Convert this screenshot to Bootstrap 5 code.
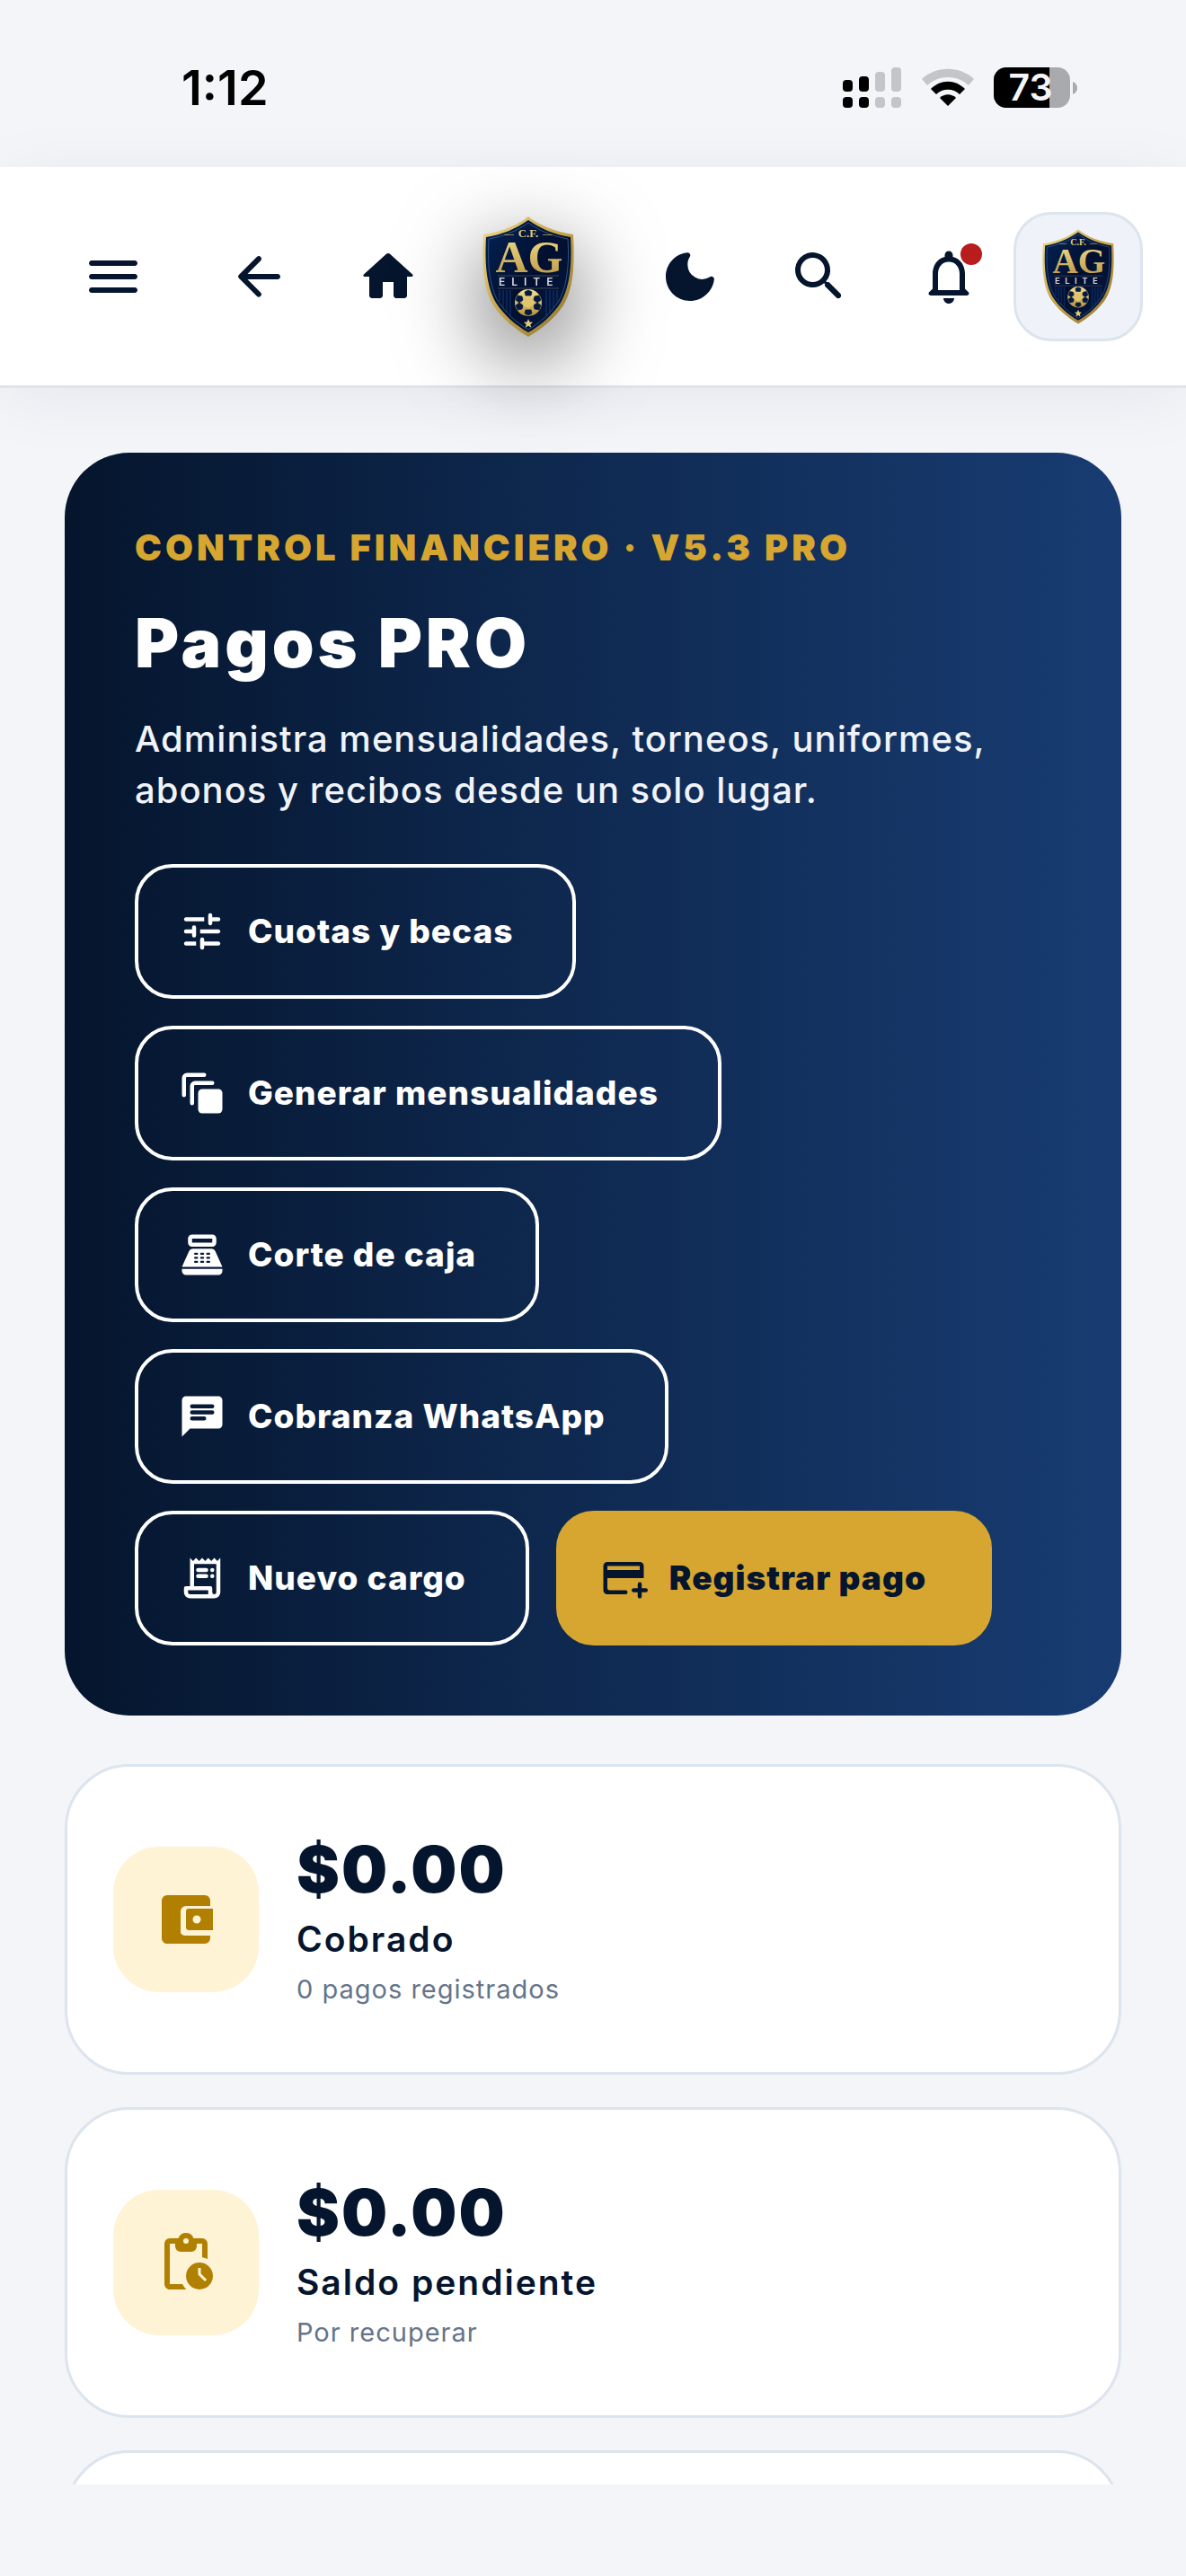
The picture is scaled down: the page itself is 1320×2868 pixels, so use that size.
<!DOCTYPE html>
<html lang="es">
<head>
<meta charset="utf-8">
<meta name="viewport" content="width=device-width, initial-scale=1">
<title>Pagos PRO</title>
<link rel="stylesheet" href="https://cdn.jsdelivr.net/npm/bootstrap@5.3.0/dist/css/bootstrap.min.css">
<style>
  :root { --navy: #05152d; --gold: #d6a630; --line: #dce4ed; --page: #f3f5f9; }
  html, body { height: 100%; }
  body { background: var(--page); color: var(--navy); font-family: Inter, "Liberation Sans", sans-serif; overflow: hidden; }
  .phone { height: 100vh; }
  .status { height: 186px; padding: 10px 120px 0 202px; color: #000; }
  .clock { font-size: 54px; font-weight: 600; line-height: 64px; }
  .topbar { height: 246px; padding: 0 48px 0 75px; background: #fff; border-bottom: 3px solid var(--line); box-shadow: 0 12px 72px rgba(5,21,45,.06); z-index: 2; }
  .tool { width: 102px; height: 102px; padding: 0; border: 0; color: var(--navy); display: flex; align-items: center; justify-content: center; }
  .tool svg, .tile svg { width: 72px; height: 72px; fill: currentColor; }
  .tool-group { gap: 42px; }
  .nav-tools { margin: 0 54px 0 60px; }
  .side-tools { margin-right: 21px; }
  .crest { width: 102px; height: 134px; filter: drop-shadow(0 30px 48px rgba(0,0,0,.6)); }
  .dot { width: 24px; height: 24px; background: #b91c1c; top: 14px; right: 14px; }
  .avatar { width: 144px; height: 144px; border: 3px solid var(--line); border-radius: 42px; background: #eff3f9; padding: 0; }
  .avatar svg { width: 80px; height: 106px; }
  .content { padding: 72px 72px 0; margin-bottom: 102px; }
  .hero { padding: 78px; border-radius: 72px; background: linear-gradient(90deg, #05152d, #0f2a52 50%, #183c72); color: #fff; margin-bottom: 54px; }
  .eyebrow { font-size: 40px; font-weight: 900; line-height: 56px; letter-spacing: 4px; color: var(--gold); margin: 0 0 33px; }
  .hero h1 { font-size: 75px; font-weight: 900; line-height: 90px; letter-spacing: 4px; margin: 0 0 33px; }
  .intro { font-size: 40px; line-height: 57px; font-weight: 500; letter-spacing: 1px; color: #f0f3f9; margin: 0 0 54px; }
  .actions { gap: 30px; }
  .action { height: 150px; padding: 0 66px 0 44px; gap: 24px; border: 4px solid #fff; border-radius: 42px; color: #fff; font-size: 37px; font-weight: 800; letter-spacing: 1px; white-space: nowrap; }
  .action svg { width: 54px; height: 54px; fill: currentColor; }
  .action:hover { color: #fff; border-color: #fff; }
  .action.gold, .action.gold:hover { padding-right: 69px; background: var(--gold); border-color: var(--gold); color: var(--navy); font-weight: 900; }
  .stats { gap: 36px; }
  .stat { min-height: 346px; padding: 0 51px; gap: 42px; border: 3px solid var(--line); border-radius: 72px; background: #fff; }
  .tile { width: 162px; height: 162px; border-radius: 51px; background: #fff3d6; color: #b28000; }
  .amount { font-size: 72px; line-height: 98px; font-weight: 900; letter-spacing: 2px; }
  .caption { font-size: 39px; line-height: 58px; font-weight: 600; letter-spacing: 2px; }
  .note { font-size: 29px; line-height: 54px; letter-spacing: 1px; color: #64748b; }
</style>
</head>
<body>
<div class="phone d-flex flex-column">
  <div class="status d-flex align-items-center justify-content-between flex-shrink-0">
    <span class="clock">1:12</span>
    <svg width="262" height="60" viewBox="0 -7 262 60" role="img" aria-label="Señal, wifi y batería al 73">
      <g fill="#000"><rect x="0" y="14" width="11" height="13" rx="4"/><rect x="18" y="10" width="11" height="17" rx="4"/><rect y="33" width="11" height="12" rx="4"/><rect x="18" y="33" width="11" height="12" rx="4"/></g>
      <g fill="#c4c5c9"><rect x="36" y="5" width="11" height="22" rx="4"/><rect x="54" y="0" width="11" height="27" rx="4"/><rect x="36" y="33" width="11" height="12" rx="4"/><rect x="54" y="33" width="11" height="12" rx="4"/></g>
      <path d="M88 13C104-2 130-2 146 13L140 20C127 8 107 8 94 20Z" fill="#c4c5c9"/>
      <path d="M98 24C109 13 125 13 136 24L130 30C123 23 111 23 104 30Z"/>
      <path d="M108 34C113 29 121 29 126 34L117 43Z"/>
      <clipPath id="cell"><rect x="168" y="0" width="85" height="45" rx="14"/></clipPath>
      <g clip-path="url(#cell)"><rect x="168" width="85" height="45" fill="#a9aaae"/><rect x="168" width="62" height="45" fill="#000"/></g>
      <path d="M256 16q5 2 5 7t-5 7z" fill="#a9aaae"/>
      <text x="209" y="37" text-anchor="middle" font-family="Inter, sans-serif" font-size="41" font-weight="600" fill="#f4f5f9">73</text>
    </svg>
  </div>

  <header class="topbar d-flex align-items-center flex-shrink-0 position-relative">
    <button class="tool btn" aria-label="Menú"><svg viewBox="0 0 24 24"><path d="M4 18h16c.6 0 1-.5 1-1s-.4-1-1-1H4c-.6 0-1 .5-1 1s.4 1 1 1zm0-5h16c.6 0 1-.5 1-1s-.4-1-1-1H4c-.6 0-1 .5-1 1s.4 1 1 1zM3 7c0 .5.400 1 1 1h16c.6 0 1-.5 1-1s-.4-1-1-1H4c-.6 0-1 .5-1 1z"/></svg></button>
    <nav class="tool-group nav-tools d-flex">
      <button class="tool btn" aria-label="Volver"><svg viewBox="0 0 24 24"><path d="M19 11H7.830l4.880-4.880c.39-.39.390-1.030 0-1.420a1 1 0 0 0-1.410 0l-6.590 6.590a1 1 0 0 0 0 1.410l6.590 6.590a1 1 0 0 0 1.410-1.410L7.830 13H19c.55 0 1-.45 1-1s-.45-1-1-1z"/></svg></button>
      <button class="tool btn" aria-label="Inicio"><svg viewBox="0 0 24 24"><path d="M10 19v-5h4v5c0 .55.450 1 1 1h3c.55 0 1-.45 1-1v-7h1.700c.46 0 .68-.57.330-.87L12.670 3.600c-.38-.34-.96-.34-1.340 0l-8.360 7.530c-.34.300-.13.870.330.870H5v7c0 .55.450 1 1 1h3c.55 0 1-.45 1-1z"/></svg></button>
    </nav>
    <svg class="crest" viewBox="0 0 102 134" role="img" aria-label="C.F. AG Elite">
      <defs>
        <linearGradient id="goldfill" x1="0" y1="0" x2="1" y2="1"><stop offset="0" stop-color="#f0dc8c"/><stop offset=".5" stop-color="#c3a24a"/><stop offset="1" stop-color="#8f7330"/></linearGradient>
        <linearGradient id="goldtext" x1="0" y1="0" x2="0" y2="1"><stop offset="0" stop-color="#f3df92"/><stop offset="1" stop-color="#b8933e"/></linearGradient>
        <linearGradient id="navyfill" x1="0" y1="0" x2="1" y2="1"><stop offset="0" stop-color="#032455"/><stop offset=".5" stop-color="#020f30"/><stop offset="1" stop-color="#03193f"/></linearGradient>
      </defs>
      <g id="shield">
        <path d="M51 0C37 11 20 17 1 20C-1 60 2 82 12 99C22 114 37 126 51 134C65 126 80 114 90 99C100 82 103 60 101 20C82 17 65 11 51 0Z" fill="url(#goldfill)"/>
        <path d="M51 4C37 14 22 20 4 23C2 59 6 80 15 96C24 110 38 122 51 129C64 122 78 110 87 96C96 80 100 59 98 23C80 20 65 14 51 4Z" fill="url(#navyfill)"/>
        <path d="M51 7C37 17 23 22 7 25C5 58 9 79 17 94C26 108 39 119 51 126C63 119 76 108 85 94C93 79 97 58 95 25C79 22 65 17 51 7Z" fill="none" stroke="#2e5285" stroke-width="1"/>
        <path d="M19 82v13M23 82v20M27 82v24M31 82v28M71 82v28M75 82v24M79 82v20M83 82v13" stroke="#123a78" stroke-width="1"/>
        <path d="M24 20.500h11M67 20.500h11" stroke="#968553" stroke-width="1"/>
        <path d="M17 66h68M17 80h68" stroke="#3f4352" stroke-width="1"/>
        <text x="51" y="23" font-family="Liberation Serif, serif" font-size="13" font-weight="700" text-anchor="middle" fill="#e5cd7b">C.F.</text>
        <text x="52" y="62" font-family="Liberation Serif, serif" font-size="50" font-weight="700" text-anchor="middle" fill="url(#goldtext)">AG</text>
        <text x="18" y="77" font-family="Inter, sans-serif" font-size="12" font-weight="600" fill="#ded9e3" letter-spacing="7">ELITE</text>
        <circle cx="51" cy="96" r="15" fill="url(#goldtext)"/>
        <g fill="#061a40" stroke="#061a40" stroke-width=".8">
          <path d="M47 84l4-2 4 2-1 4h-6zM47 108l4 2 4-2-1-4h-6zM39 88l5 1 1 4-4 3-4-3zM63 88l-5 1-1 4 4 3 4-3zM39 104l5-1 1-4-4-3-4 3zM63 104l-5-1-1-4 4-3 4 3z"/>
        </g>
        <path d="M51 90l6 3v6l-6 3-6-3v-6z" fill="#e0c56c"/>
        <path d="M51 114l1.500 3.500 3.500.3-2.700 2.400.9 3.600-3.200-2-3.200 2 .9-3.600-2.700-2.400 3.500-.3z" fill="#e3cb78"/>
      </g>
    </svg>
    <div class="tool-group side-tools d-flex ms-auto">
      <button class="tool btn" aria-label="Modo oscuro"><svg viewBox="0 0 24 24"><path d="M11.010 3.050C6.510 3.540 3 7.360 3 12c0 4.970 4.030 9 9 9 4.630 0 8.450-3.500 8.950-8 .09-.79-.78-1.420-1.540-.95A5.403 5.403 0 0 1 11.100 7.500c0-1.060.310-2.060.840-2.890.45-.67-.04-1.630-.93-1.560z"/></svg></button>
      <button class="tool btn" aria-label="Buscar"><svg viewBox="0 0 24 24"><path d="M15.500 14h-.79l-.28-.27a6.500 6.500 0 0 0 1.480-5.340c-.47-2.780-2.790-5-5.590-5.340a6.505 6.505 0 0 0-7.270 7.270c.34 2.800 2.560 5.120 5.340 5.590a6.500 6.500 0 0 0 5.340-1.480l.27.280v.79l4.250 4.250c.41.410 1.080.410 1.490 0s.41-1.080 0-1.490L15.500 14zm-6 0C7.010 14 5 11.990 5 9.500S7.010 5 9.500 5 14 7.010 14 9.500 11.990 14 9.500 14z"/></svg></button>
      <button class="tool btn position-relative" aria-label="Notificaciones"><svg viewBox="0 0 24 24"><path d="M12 22c1.100 0 2-.9 2-2h-4c0 1.100.900 2 2 2zm7.200-4.300L18 16.500V11c0-3.070-1.630-5.640-4.500-6.320V4c0-.83-.67-1.500-1.500-1.500s-1.500.670-1.500 1.500v.68C7.640 5.360 6 7.920 6 11v5.500l-1.200 1.200c-.6.500-.2 1.300.5 1.300h13.400c.7 0 1.100-.8.500-1.300zM16 17H8v-6c0-2.480 1.510-4.500 4-4.500s4 2.020 4 4.500v6z"/></svg><span class="dot position-absolute rounded-circle"></span></button>
    </div>
    <button class="avatar btn d-flex align-items-center justify-content-center" aria-label="Perfil"><svg viewBox="0 0 102 134" aria-hidden="true"><use href="#shield"/></svg></button>
  </header>

  <main class="content flex-grow-1 overflow-hidden">
    <section class="hero">
      <p class="eyebrow">CONTROL FINANCIERO · V5.3 PRO</p>
      <h1>Pagos PRO</h1>
      <p class="intro">Administra mensualidades, torneos, uniformes, abonos y recibos desde un solo lugar.</p>
      <div class="actions d-flex flex-wrap">
        <button class="action btn d-flex align-items-center"><svg viewBox="0 0 24 24"><path d="M3 18c0 .55.450 1 1 1h5v-2H4c-.55 0-1 .45-1 1zM3 6c0 .55.450 1 1 1h9V5H4c-.55 0-1 .45-1 1zm10 14v-1h7c.55 0 1-.45 1-1s-.45-1-1-1h-7v-1a1 1 0 0 0-2 0v4a1 1 0 0 0 2 0zM7 10v1H4a1 1 0 0 0 0 2h3v1a1 1 0 0 0 2 0v-4a1 1 0 0 0-2 0zm14 2c0-.55-.45-1-1-1h-9v2h9c.55 0 1-.45 1-1zm-5-3c.55 0 1-.45 1-1V7h3a1 1 0 0 0 0-2h-3V4a1 1 0 0 0-2 0v4c0 .55.450 1 1 1z"/></svg>Cuotas y becas</button>
        <button class="action btn d-flex align-items-center"><svg viewBox="0 0 24 24"><rect x="10" y="10" width="12" height="12" rx="2"/><path d="M7 17V8.500A1.500 1.500 0 0 1 8.500 7H17M3 13V4.500A1.500 1.500 0 0 1 4.500 3H13" fill="none" stroke="currentColor" stroke-width="2" stroke-linecap="round"/></svg>Generar mensualidades</button>
        <button class="action btn d-flex align-items-center"><svg viewBox="0 0 24 24"><path fill-rule="evenodd" d="M17 2H7a2 2 0 0 0-2 2v2c0 1.100.900 2 2 2h10a2 2 0 0 0 2-2V4a2 2 0 0 0-2-2zm0 4H7V4h10v2zm3 16H4a2 2 0 0 1-2-2v-1h20v1a2 2 0 0 1-2 2zM18.500 10.200A2 2 0 0 0 16.700 9H7.300a2 2 0 0 0-1.800 1.200L2 18h20l-3.500-7.800zM9.500 16h-1a.5.5 0 0 1 0-1h1a.5.5 0 0 1 0 1zm0-2h-1a.5.5 0 0 1 0-1h1a.5.5 0 0 1 0 1zm0-2h-1a.5.5 0 0 1 0-1h1a.5.5 0 0 1 0 1zm3 4h-1a.5.5 0 0 1 0-1h1a.5.5 0 0 1 0 1zm0-2h-1a.5.5 0 0 1 0-1h1a.5.5 0 0 1 0 1zm0-2h-1a.5.5 0 0 1 0-1h1a.5.5 0 0 1 0 1zm3 4h-1a.5.5 0 0 1 0-1h1a.5.5 0 0 1 0 1zm0-2h-1a.5.5 0 0 1 0-1h1a.5.5 0 0 1 0 1zm0-2h-1a.5.5 0 0 1 0-1h1a.5.5 0 0 1 0 1z"/></svg>Corte de caja</button>
        <button class="action btn d-flex align-items-center"><svg viewBox="0 0 24 24"><path fill-rule="evenodd" d="M20 2H4a2 2 0 0 0-2 2v18l4-4h14a2 2 0 0 0 2-2V4a2 2 0 0 0-2-2zM7 6h10a1 1 0 0 1 0 2H7a1 1 0 0 1 0-2zm6 8H7a1 1 0 0 1 0-2h6a1 1 0 0 1 0 2zm4-3H7a1 1 0 0 1 0-2h10a1 1 0 0 1 0 2z"/></svg>Cobranza WhatsApp</button>
        <button class="action btn d-flex align-items-center"><svg viewBox="0 0 24 24"><path fill-rule="evenodd" d="M19.500 3.500L18 2l-1.500 1.500L15 2l-1.500 1.500L12 2l-1.500 1.500L9 2 7.500 3.500 6 2v14H4a1 1 0 0 0-1 1v2a3 3 0 0 0 3 3h12a3 3 0 0 0 3-3V2l-1.500 1.500zM15 20H6a1 1 0 0 1-1-1v-1h10v2zm4-1a1 1 0 0 1-2 0v-2a1 1 0 0 0-1-1H8V5h11v14z"/><path d="M10 7h4a1 1 0 0 1 0 2h-4a1 1 0 0 1 0-2zm0 3h4a1 1 0 0 1 0 2h-4a1 1 0 0 1 0-2z"/><circle cx="17" cy="8" r="1"/><circle cx="17" cy="11" r="1"/></svg>Nuevo cargo</button>
        <button class="action gold btn d-flex align-items-center"><svg viewBox="0 0 24 24"><path d="M20 4H4a2 2 0 0 0-2 2v12c0 1.100.890 2 2 2h9a1 1 0 0 0 0-2H5c-.55 0-1-.45-1-1v-5h18V6a2 2 0 0 0-2-2zm0 4H4V6h16v2zm4 10a1 1 0 0 1-1 1h-2v2a1 1 0 0 1-2 0v-2h-2a1 1 0 0 1 0-2h2v-2a1 1 0 0 1 2 0v2h2a1 1 0 0 1 1 1z"/></svg>Registrar pago</button>
      </div>
    </section>
    <section class="stats d-flex flex-column">
      <article class="stat d-flex align-items-center">
        <div class="tile d-flex align-items-center justify-content-center flex-shrink-0"><svg viewBox="0 0 24 24"><path fill-rule="evenodd" d="M10 17V9a2 2 0 0 1 2-2h9V5a2 2 0 0 0-2-2H5a2 2 0 0 0-2 2v14c0 1.100.900 2 2 2h14a2 2 0 0 0 2-2H21v-1h-9a2 2 0 0 1-2-1zM13 8a1 1 0 0 0-1 1v6c0 .55.450 1 1 1h9V8h-9zm3 5.500a1.500 1.500 0 1 1 0-3 1.500 1.500 0 0 1 0 3z"/></svg></div>
        <div><div class="amount">$0.00</div><div class="caption">Cobrado</div><div class="note">0 pagos registrados</div></div>
      </article>
      <article class="stat d-flex align-items-center">
        <div class="tile d-flex align-items-center justify-content-center flex-shrink-0"><svg viewBox="0 0 24 24"><path fill-rule="evenodd" d="M17 12a5 5 0 1 0 0 10 5 5 0 0 0 0-10zm2 7-2.500-2.500V14h1v2.100l2.200 2.200zM18 3h-3.180a3 3 0 0 0-5.640 0H6a2 2 0 0 0-2 2v15c0 1.100.900 2 2 2h6.110a6.700 6.700 0 0 1-1.420-2H6V5h2v1a2 2 0 0 0 2 2h4a2 2 0 0 0 2-2V5h2v5.080c.71.100 1.380.310 2 .6V5a2 2 0 0 0-2-2zm-6 2a1 1 0 1 1 0-2 1 1 0 0 1 0 2z"/></svg></div>
        <div><div class="amount">$0.00</div><div class="caption">Saldo pendiente</div><div class="note">Por recuperar</div></div>
      </article>
      <article class="stat"></article>
    </section>
  </main>
</div>
<script src="https://cdn.jsdelivr.net/npm/bootstrap@5.3.0/dist/js/bootstrap.bundle.min.js"></script>
</body>
</html>
